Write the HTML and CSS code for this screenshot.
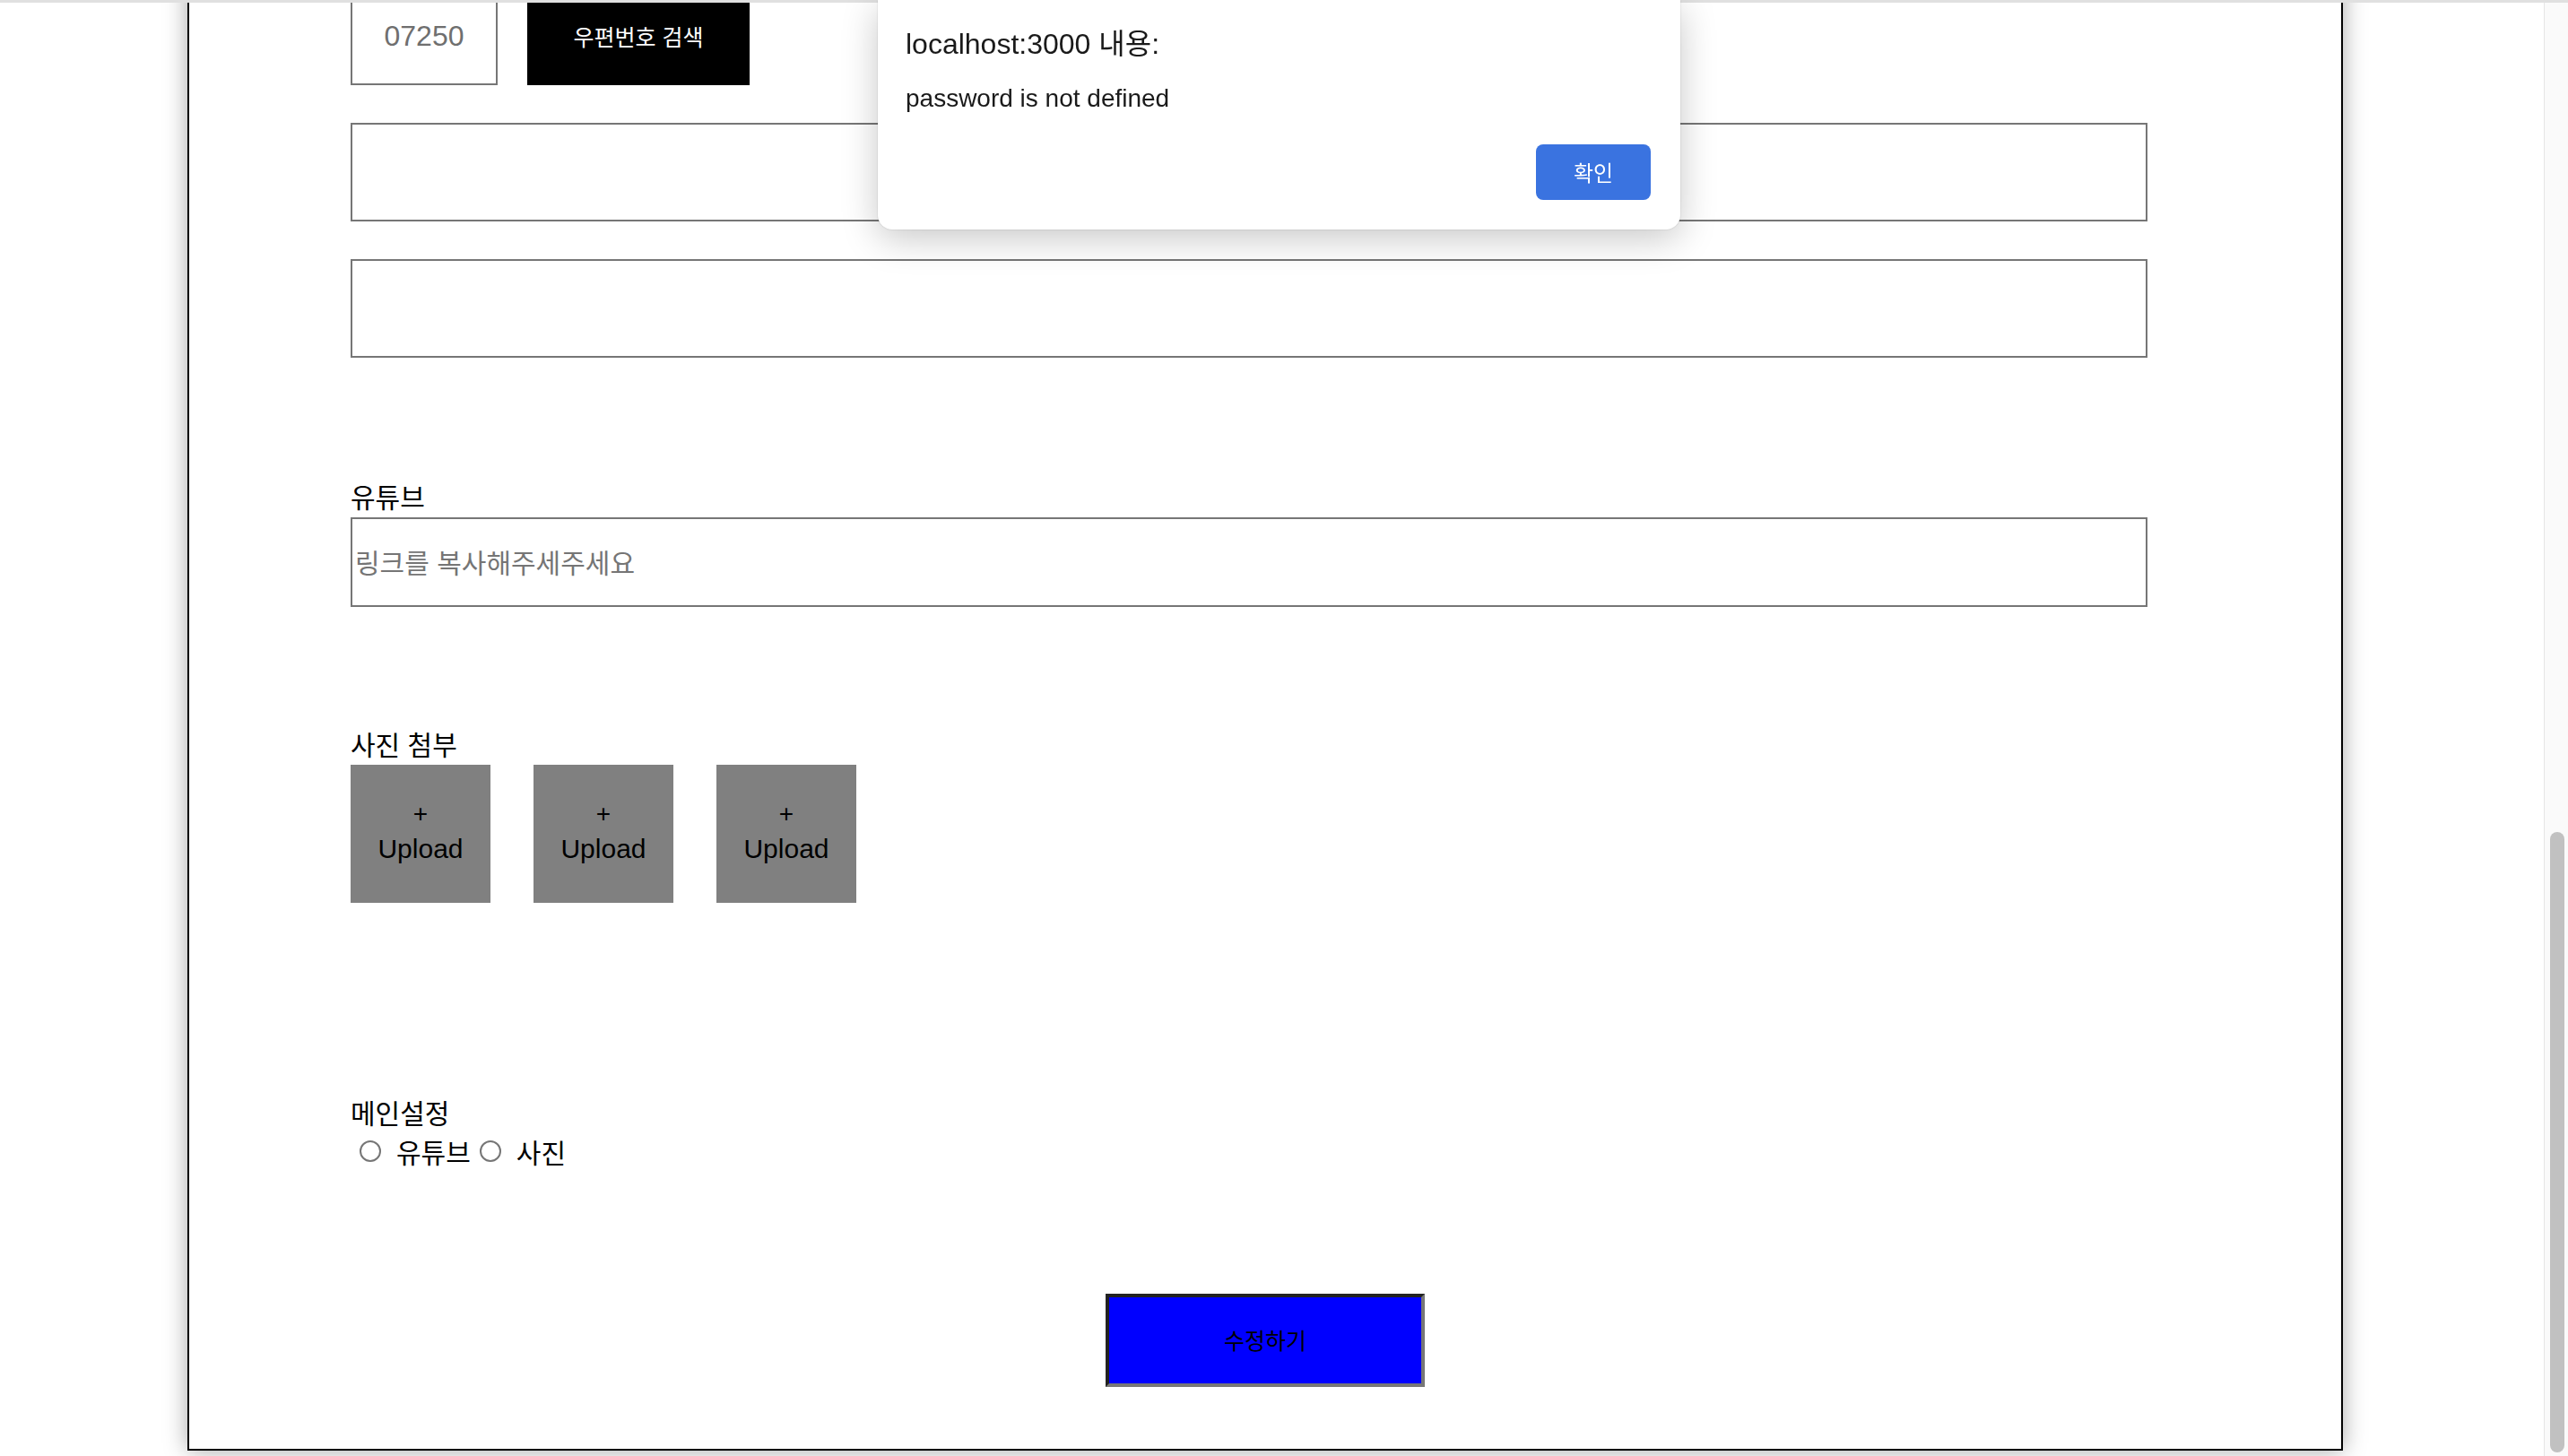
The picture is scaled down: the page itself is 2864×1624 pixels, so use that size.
FILE: index.html
```html
<!DOCTYPE html>
<html lang="ko">
<head>
    <meta charset="UTF-8">
    <meta name="viewport" content="width=device-width, initial-scale=1.0">
    <title>게시물 수정</title>
    <link rel="stylesheet" href="styles.css">
</head>
<body>
    <div class="topLine"></div>

    <div class="page">
        <div class="mainWrapper">
            <div class="zipRow">
                <input class="zipInput" type="text" value="07250" readonly>
                <button class="zipButton">우편번호 검색</button>
            </div>
            <input class="addressInput" type="text">
            <input class="addressInput" type="text">

            <div class="section youtubeSection">
                <div class="sectionLabel">유튜브</div>
                <input class="youtubeInput" type="text" placeholder="링크를 복사해주세주세요">
            </div>

            <div class="section photoSection">
                <div class="sectionLabel">사진 첨부</div>
                <div class="uploadList">
                    <div class="uploadBox"><span class="plus">+</span><span>Upload</span></div>
                    <div class="uploadBox"><span class="plus">+</span><span>Upload</span></div>
                    <div class="uploadBox"><span class="plus">+</span><span>Upload</span></div>
                </div>
            </div>

            <div class="section mainSection">
                <div class="sectionLabel">메인설정</div>
                <div class="radioRow">
                    <input type="radio" name="main" id="mainYoutube">
                    <label for="mainYoutube">유튜브</label>
                    <input type="radio" name="main" id="mainPhoto">
                    <label for="mainPhoto">사진</label>
                </div>
            </div>

            <div class="submitRow">
                <button class="submitButton">수정하기</button>
            </div>
        </div>
    </div>

    <!-- fake window scrollbar -->
    <div class="scrollTrack">
        <div class="scrollThumb"></div>
    </div>

    <!-- browser alert() dialog -->
    <div class="alertBox">
        <div class="alertTitle">localhost:3000 내용:</div>
        <div class="alertMessage">password is not defined</div>
        <div class="alertActions">
            <button class="alertButton">확인</button>
        </div>
    </div>
</body>
</html>
```

FILE: styles.css
```css
body {
    margin: 0;
    height: 1624px;
    display: flex;
    overflow: hidden;
    background: #ffffff;
    font-family: "Noto Sans CJK KR", sans-serif;
    color: #000000;
}

/* thin browser line at the very top */
.topLine {
    position: fixed;
    top: 0;
    left: 0;
    right: 0;
    height: 3px;
    background: #e0e0e0;
    z-index: 1;
}

.page {
    flex: 1;
}

.mainWrapper {
    width: 2220px;
    margin: -57px 0 0 209px;
    padding: 40px 0 69px 180px;
    border: 2px solid #000000;
    background: #ffffff;
    box-shadow: 0 0 24px rgba(0, 0, 0, 0.35);
}

input,
button {
    font-family: inherit;
    box-sizing: border-box;
    margin: 0;
}

.zipRow {
    display: flex;
    height: 110px;
}

.zipInput {
    width: 164px;
    height: 110px;
    border: 2px solid #767676;
    font-family: "Liberation Sans", "Noto Sans CJK KR", sans-serif;
    font-size: 32px;
    color: #6f6f6f;
    text-align: center;
    outline: none;
}

.zipButton {
    width: 248px;
    height: 110px;
    margin-left: 33px;
    border: none;
    background: #000000;
    color: #ffffff;
    font-size: 25px;
}

.addressInput {
    display: block;
    width: 2004px;
    height: 110px;
    margin-top: 42px;
    border: 2px solid #767676;
}

.sectionLabel {
    font-size: 30px;
    line-height: 38px;
    margin-bottom: 5px;
}

.youtubeSection {
    margin-top: 135px;
}

.youtubeInput {
    display: block;
    width: 2004px;
    height: 100px;
    padding: 0 3px 3px;
    border: 2px solid #767676;
    font-size: 30px;
}

.youtubeInput::placeholder {
    color: #757575;
}

.photoSection {
    margin-top: 133px;
}

.uploadList {
    display: flex;
    gap: 48px;
}

.uploadBox {
    width: 156px;
    height: 154px;
    background: #808080;
    display: flex;
    flex-direction: column;
    align-items: center;
    justify-content: center;
    font-family: "Liberation Sans", "Noto Sans CJK KR", sans-serif;
    font-size: 30px;
    line-height: 44px;
}

.uploadBox .plus {
    font-size: 28px;
    line-height: 34px;
}

.mainSection {
    margin-top: 214px;
}

.radioRow {
    display: flex;
    align-items: center;
    height: 40px;
    margin-top: 2px;
    font-size: 30px;
}

.radioRow input {
    appearance: none;
    width: 24px;
    height: 24px;
    margin: 0 17px 0 10px;
    border: 2px solid #767676;
    border-radius: 50%;
    background: #ffffff;
}

.submitRow {
    margin-top: 139px;
    margin-left: -180px;
    text-align: center;
}

.submitButton {
    width: 356px;
    height: 104px;
    padding-bottom: 4px;
    border-style: solid;
    border-width: 4px;
    border-color: #222222 #777777 #777777 #222222;
    background: #0000ff;
    color: #000000;
    font-size: 25px;
}

.scrollTrack {
    width: 26px;
    border-left: 1px solid #e6e6e6;
    background: #fafafa;
}

.scrollThumb {
    width: 16px;
    height: 692px;
    margin: 928px 0 0 6px;
    border-radius: 8px;
    background: #c1c1c1;
}

.alertBox {
    position: fixed;
    top: 0;
    left: 979px;
    width: 895px;
    height: 256px;
    box-sizing: border-box;
    padding: 30px 33px 33px 31px;
    background: #ffffff;
    border-radius: 0 0 16px 16px;
    box-shadow: 0 10px 40px rgba(0, 0, 0, 0.22), 0 0 2px rgba(0, 0, 0, 0.2);
    font-family: "Liberation Sans", "Noto Sans CJK KR", sans-serif;
    z-index: 2;
}

.alertTitle {
    font-size: 32px;
    line-height: 38px;
    color: #1a1a1a;
}

.alertMessage {
    margin-top: 24px;
    font-size: 28px;
    line-height: 36px;
    color: #1a1a1a;
}

.alertActions {
    display: flex;
    justify-content: flex-end;
    margin-top: 33px;
}

.alertButton {
    width: 128px;
    height: 62px;
    padding-bottom: 2px;
    border: none;
    border-radius: 8px;
    background: #3a73e0;
    color: #ffffff;
    font-family: "Noto Sans CJK KR", sans-serif;
    font-size: 24px;
}
```
